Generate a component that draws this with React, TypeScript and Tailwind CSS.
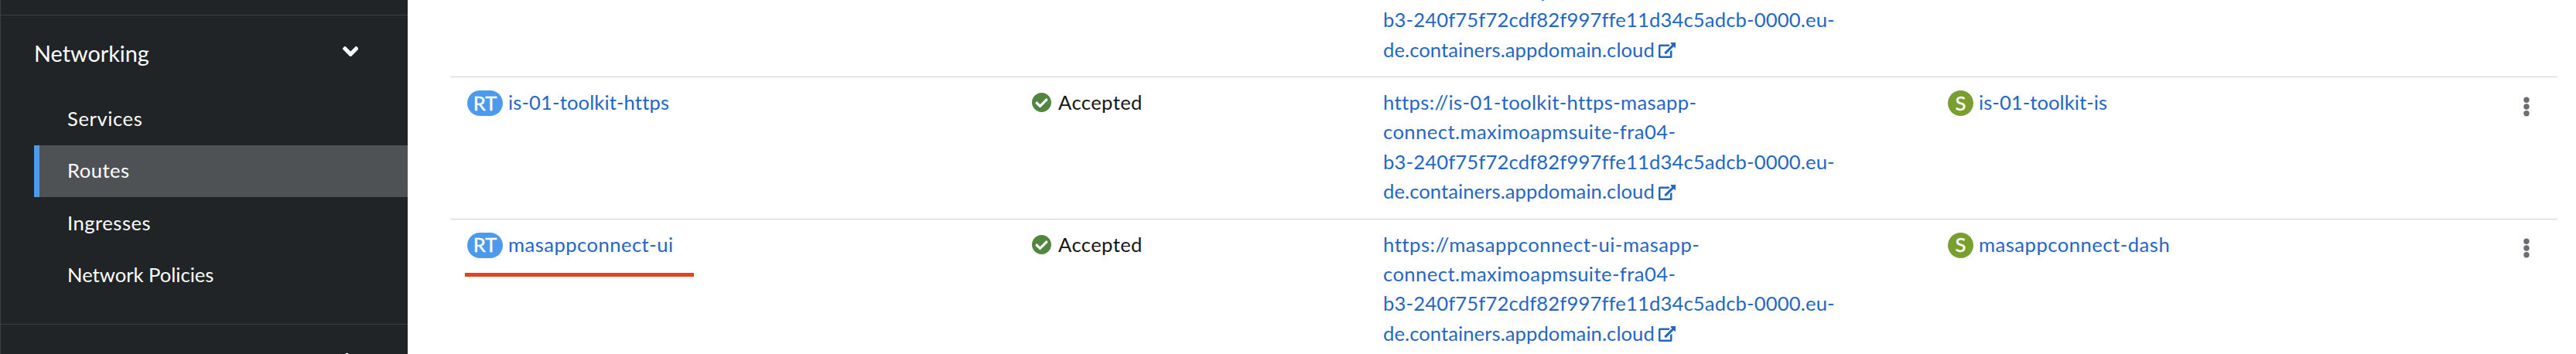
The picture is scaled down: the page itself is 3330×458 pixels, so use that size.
import type { ReactNode } from 'react';

const HOST_LINES = [
  { text: 'connect.maximoapmsuite-fra04-', tracking: 'tracking-[0.43px]' },
  { text: 'b3-240f75f72cdf82f997ffe11d34c5adcb-0000.eu-', tracking: 'tracking-[0.16px]' },
];

type Route = {
  name: string;
  nameTracking: string;
  url: string;
  urlTracking: string;
  service: string;
  serviceTracking: string;
  marked?: boolean;
};

const routes: Route[] = [
  {
    name: 'is-01-toolkit-https',
    nameTracking: 'tracking-[0.12px]',
    url: 'https://is-01-toolkit-https-masapp-',
    urlTracking: 'tracking-[0.36px]',
    service: 'is-01-toolkit-is',
    serviceTracking: 'tracking-[0.06px]',
  },
  {
    name: 'masappconnect-ui',
    nameTracking: 'tracking-[0.46px]',
    url: 'https://masappconnect-ui-masapp-',
    urlTracking: 'tracking-[0.53px]',
    service: 'masappconnect-dash',
    serviceTracking: 'tracking-[0.5px]',
    marked: true,
  },
];

const navItems = [
  { label: 'Services', tracking: 'tracking-[0.6px]' },
  { label: 'Routes', tracking: 'tracking-[0.5px]', active: true },
  { label: 'Ingresses', tracking: 'tracking-[0.5px]' },
  { label: 'Network Policies', tracking: 'tracking-normal' },
];

function AngleIcon({ className }: { className: string }) {
  return (
    <svg viewBox="0 152.8 320 206.6" fill="currentColor" className={className}>
      <path d="M143 352.3L7 216.3c-9.4-9.4-9.4-24.6 0-33.9l22.6-22.6c9.4-9.4 24.6-9.4 33.9 0l96.4 96.4 96.4-96.4c9.4-9.4 24.6-9.4 33.9 0l22.6 22.6c9.4 9.4 9.4 24.6 0 33.9l-136 136c-9.2 9.4-24.4 9.4-33.8 0z" />
    </svg>
  );
}

function ExternalLinkIcon() {
  return (
    <svg viewBox="0 0 576 512" fill="currentColor" className="ml-[5px] mt-[10.5px] h-[20px] w-[22.5px] shrink-0">
      <path d="M576 24v127.984c0 21.461-25.96 31.98-40.971 16.971l-35.707-35.709-243.523 243.523c-9.373 9.373-24.568 9.373-33.941 0l-22.627-22.627c-9.373-9.373-9.373-24.569 0-33.941L442.756 76.676l-35.703-35.705C391.982 25.9 402.656 0 424.024 0H552c13.255 0 24 10.745 24 24zM407.029 270.794l-16 16A23.999 23.999 0 0 0 384 303.765V448H64V128h264a24.003 24.003 0 0 0 16.97-7.029l16-16C376.089 89.851 365.381 64 344 64H48C21.49 64 0 85.49 0 112v352c0 26.51 21.49 48 48 48h352c26.51 0 48-21.49 48-48V287.764c0-21.382-25.852-32.09-40.971-16.97z" />
    </svg>
  );
}

function CheckCircleIcon() {
  return (
    <svg viewBox="8 8 496 496" fill="currentColor" className="mt-[7px] size-[25px] shrink-0 text-[#52853f]">
      <path d="M504 256c0 136.967-111.033 248-248 248S8 392.967 8 256 119.033 8 256 8s248 111.033 248 248zM227.314 387.314l184-184c6.248-6.248 6.248-16.379 0-22.627l-22.627-22.627c-6.248-6.249-16.379-6.249-22.628 0L216 308.118l-70.059-70.059c-6.248-6.248-16.379-6.248-22.628 0l-22.627 22.627c-6.248 6.248-6.248 16.379 0 22.627l104 104c6.249 6.249 16.379 6.249 22.628.001z" />
    </svg>
  );
}

function KebabIcon() {
  return (
    <svg viewBox="0 0 8 26" fill="currentColor" className="mt-[11.5px] h-[26px] w-2 text-[#6a6e73]">
      <circle cx="4" cy="4.3" r="3.7" />
      <circle cx="4" cy="13" r="3.7" />
      <circle cx="4" cy="21.7" r="3.7" />
    </svg>
  );
}

function Badge({ className, children }: { className: string; children: ReactNode }) {
  return (
    <span
      className={`mt-1 flex h-[33px] shrink-0 items-center justify-center rounded-full leading-none text-white [-webkit-text-stroke:0.4px_white] ${className}`}
    >
      {children}
    </span>
  );
}

function RouteRow({ route }: { route: Route }) {
  return (
    <div className="grid h-[183.6px] grid-cols-[730px_454px_730px_1fr_72px] border-t border-[#d2d2d2] pl-[22px] pt-[13px]">
      <div className="relative flex items-start text-[#2566c5]">
        <Badge className="w-[46px] bg-[#4c9aec]">RT</Badge>
        <a className={`ml-[7px] ${route.nameTracking}`}>{route.name}</a>
        {route.marked && <span className="absolute -left-[3px] top-[56px] h-[5px] w-[296px] bg-[#e93f23]" />}
      </div>
      <div className="flex items-start">
        <CheckCircleIcon />
        <span className="ml-[9px] tracking-[0.4px]">Accepted</span>
      </div>
      <a className="flex flex-col whitespace-nowrap text-[#2566c5]">
        <span className={route.urlTracking}>{route.url}</span>
        {HOST_LINES.map((line) => (
          <span key={line.text} className={line.tracking}>
            {line.text}
          </span>
        ))}
        <span className="flex items-start tracking-[0.08px]">
          de.containers.appdomain.cloud
          <ExternalLinkIcon />
        </span>
      </a>
      <div className="flex items-start text-[#2566c5]">
        <Badge className="w-[33px] bg-[#799f2e]">S</Badge>
        <a className={`ml-[7px] ${route.serviceTracking}`}>{route.service}</a>
      </div>
      <div className="flex items-start pl-[27.5px]">
        <KebabIcon />
      </div>
    </div>
  );
}

export default function App() {
  return (
    <div className="flex h-[458px] w-[3330px] overflow-hidden bg-white font-['Lato',sans-serif] text-[25.6px]/[38.4px] text-[#151515]">
      <nav className="flex w-[527px] shrink-0 flex-col border-l border-[#3c3f42] bg-[#212427] pt-[19px] text-white">
        <section className="h-[400px] shrink-0 border-t border-[#3c3f42] pt-[28px]">
          <div className="flex items-start justify-between pl-[43px] pr-[64px] text-[28.8px]/[43.2px]">
            <span>Networking</span>
            <AngleIcon className="mt-[12.3px] h-[13.2px] w-[20.4px]" />
          </div>
          <ul className="mt-[29.2px] pl-[43px]">
            {navItems.map((item) => (
              <li
                key={item.label}
                className={`flex h-[67.2px] items-center border-l-[7px] pb-px pl-[36px] ${
                  item.active ? 'border-[#4c9aec] bg-[#4f5255]' : 'border-transparent'
                } ${item.tracking}`}
              >
                {item.label}
              </li>
            ))}
          </ul>
        </section>
        <section className="flex h-[61px] shrink-0 items-start justify-end border-t border-[#3c3f42] pr-[64.5px] pt-[40.4px]">
          <AngleIcon className="h-[13.2px] w-[20.4px] -rotate-90" />
        </section>
      </nav>
      <main className="min-w-0 grow pl-[55px] pr-[24px]">
        <div className="-mt-[84.6px]">
          <div className="grid h-[183.6px] grid-cols-[1184px_1fr] border-t border-[#d2d2d2] pl-[22px] pt-[13px]">
            <a className="col-start-2 flex flex-col whitespace-nowrap pt-[38.4px] text-[#2566c5]">
              {HOST_LINES.map((line) => (
                <span key={line.text} className={line.tracking}>
                  {line.text}
                </span>
              ))}
              <span className="flex items-start tracking-[0.08px]">
                de.containers.appdomain.cloud
                <ExternalLinkIcon />
              </span>
            </a>
          </div>
          {routes.map((route) => (
            <RouteRow key={route.name} route={route} />
          ))}
        </div>
      </main>
    </div>
  );
}
